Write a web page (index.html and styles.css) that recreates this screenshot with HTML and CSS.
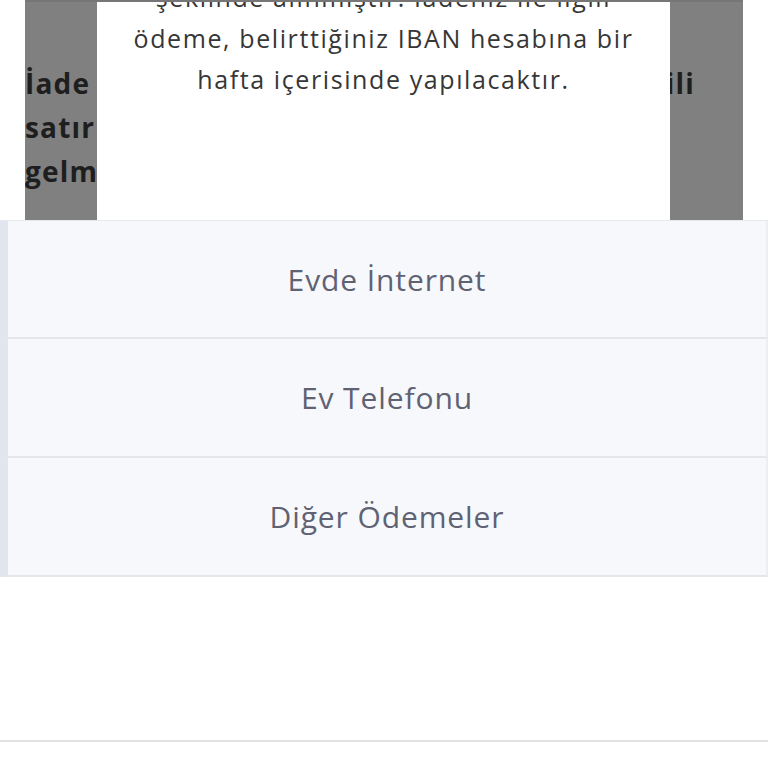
FILE: index.html
```html
<!DOCTYPE html>
<html lang="tr">
<head>
<meta charset="utf-8">
<link rel="stylesheet" href="styles.css">
</head>
<body>
<div class="page">
  <section class="backdrop-area">
    <div class="overlay">
      <div class="under">
        <div class="under-line"><span>İade</span><span>ilgili</span></div>
        <div class="under-line"><span>satır</span></div>
        <div class="under-line"><span>gelm</span></div>
      </div>
      <div class="modal">
        <p class="modal-text">şeklinde alınmıştır. İadeniz ile ilgili<br>ödeme, belirttiğiniz IBAN hesabına bir<br>hafta içerisinde yapılacaktır.</p>
      </div>
    </div>
  </section>
  <ul class="menu">
    <li class="menu-item">Evde İnternet</li>
    <li class="menu-item">Ev Telefonu</li>
    <li class="menu-item">Diğer Ödemeler</li>
  </ul>
  <div class="footer-space"></div>
</div>
</body>
</html>
```
FILE: styles.css
```css
html, body {
  margin: 0;
  padding: 0;
  background: #ffffff;
}
.page {
  width: 768px;
  font-family: "Open Sans", "Liberation Sans", sans-serif;
}
.backdrop-area {
  height: 220px;
  padding: 0 25px;
  box-sizing: border-box;
}
.overlay {
  position: relative;
  height: 100%;
  background: #808080;
  border-top: 2px solid #767676;
  box-sizing: border-box;
  overflow: hidden;
}
.under {
  padding: 59px 48px 0 0;
  display: flex;
  flex-direction: column;
}
.under-line {
  display: flex;
  justify-content: space-between;
  font-size: 28px;
  font-weight: 700;
  line-height: 44px;
  letter-spacing: 1.2px;
  color: #1e1e1e;
}
.modal {
  position: absolute;
  left: 72px;
  right: 73px;
  top: -2px;
  bottom: 0;
  background: #ffffff;
  overflow: hidden;
}
.modal-text {
  margin: -23px 0 0;
  text-align: center;
  white-space: nowrap;
  font-size: 25px;
  line-height: 41px;
  letter-spacing: 1.6px;
  color: #363636;
}
.menu {
  list-style: none;
  margin: 0;
  padding: 0;
  border-top: 1px solid #e6e8ec;
}
.menu-item {
  height: 117px;
  display: flex;
  align-items: center;
  justify-content: center;
  background: #f7f8fb;
  border-left: 8px solid #e1e5ee;
  border-right: 2px solid #eceef2;
  border-bottom: 2px solid #e4e6ea;
  font-size: 30px;
  letter-spacing: 0.9px;
  color: #5f6273;
}
.menu-item:first-child {
  height: 116px;
}
.footer-space {
  height: 163px;
  border-bottom: 2px solid #e2e2e4;
}
```
